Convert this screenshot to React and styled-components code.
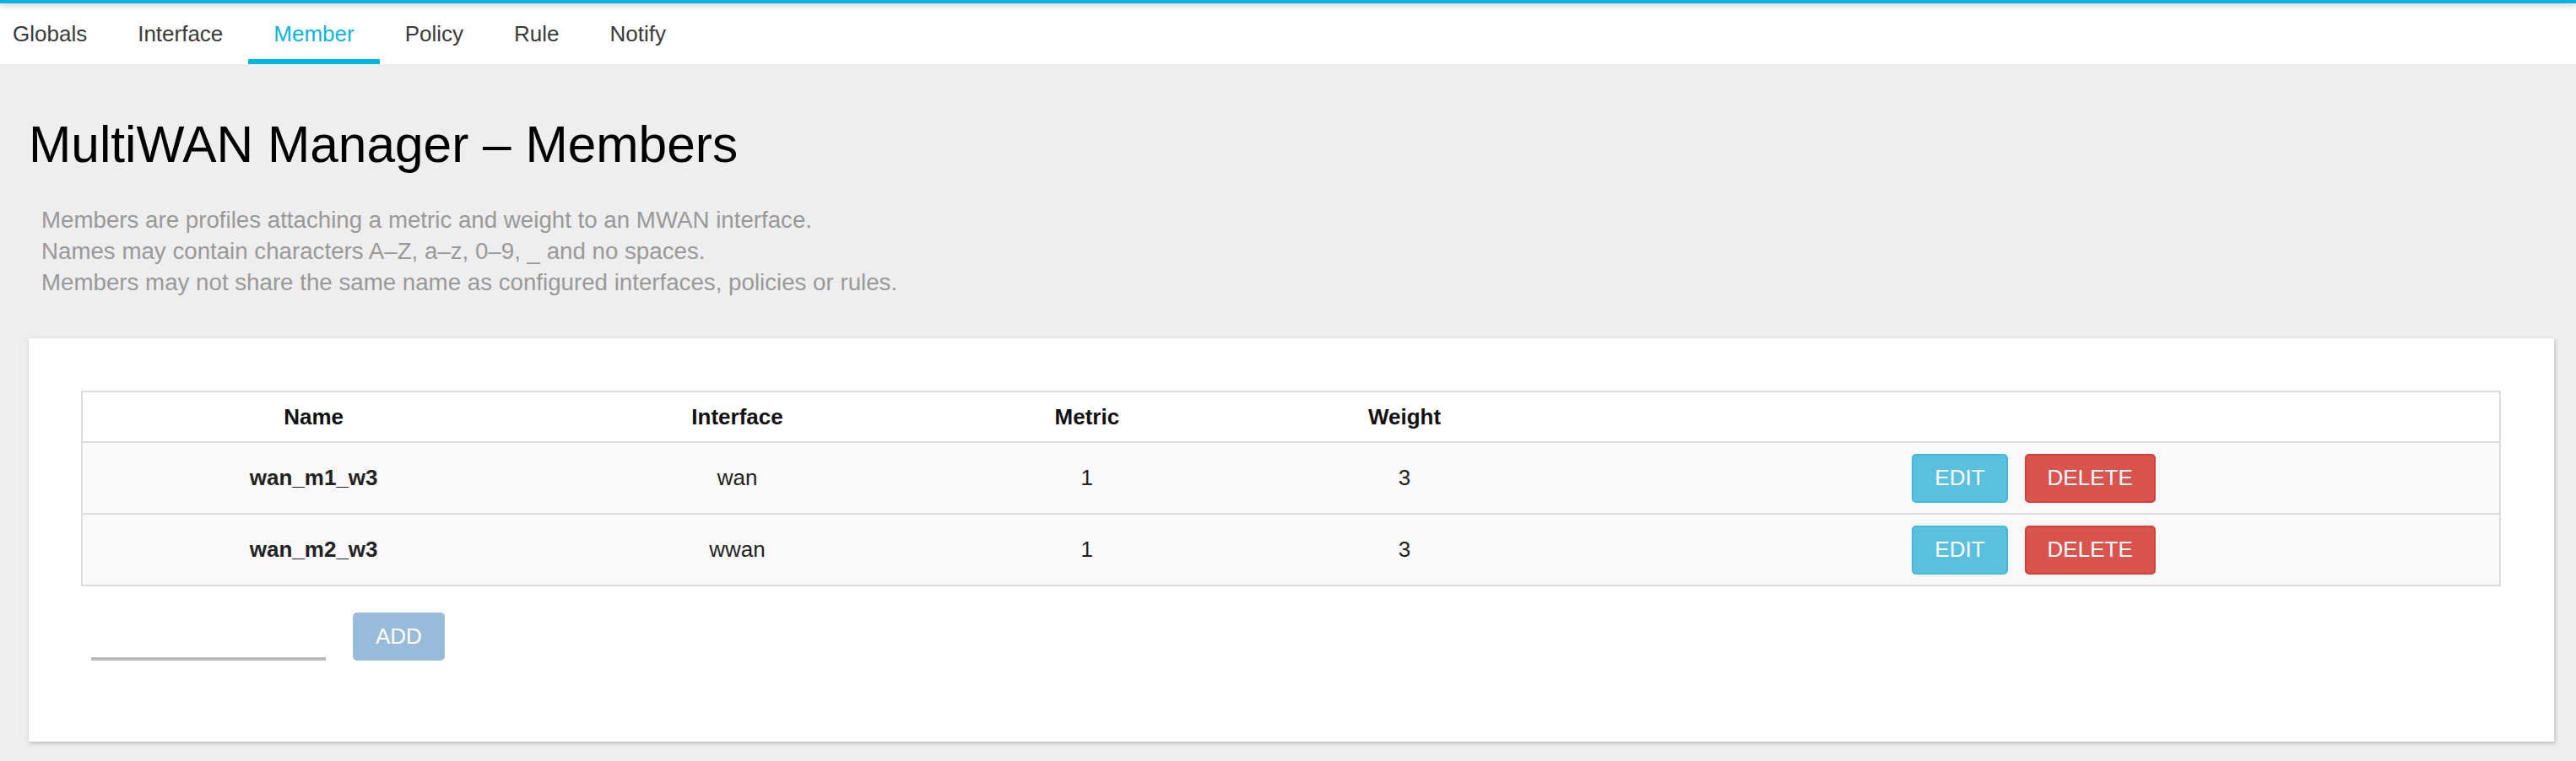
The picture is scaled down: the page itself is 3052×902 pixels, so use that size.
import React from "react";
import styled, { createGlobalStyle, css } from "styled-components";

const GlobalStyle = createGlobalStyle`
  html, body {
    margin: 0;
    padding: 0;
    background: #eeeeee;
  }
  body {
    font-family: "Liberation Sans", Arial, Helvetica, sans-serif;
  }
  * { box-sizing: border-box; }
`;

const Page = styled.div`
  display: flex;
  flex-direction: column;
  min-height: 902px;
  background: #eeeeee;
`;

const Header = styled.header`
  display: flex;
  flex-direction: column;
  background: #ffffff;
`;

const TopBar = styled.div`
  height: 4px;
  background: #06b4e2;
  box-shadow: 0 2px 7px rgba(0, 0, 0, 0.28);
  position: relative;
  z-index: 1;
`;

const Tabs = styled.nav`
  display: flex;
  height: 72px;
`;

const Tab = styled.a`
  display: block;
  padding: 21px 30px 15px;
  font-size: 26px;
  line-height: 30px;
  color: ${(p) => (p.$active ? "#0ab3e3" : "#3a3a3a")};
  border-bottom: 6px solid ${(p) => (p.$active ? "#06b4e2" : "transparent")};
  text-decoration: none;
  cursor: pointer;
  &:first-child {
    padding-left: 15px;
  }
`;

const Main = styled.main`
  display: flex;
  flex-direction: column;
  padding: 60px 26px 0 34px;
`;

const Title = styled.h2`
  margin: 0;
  font-size: 60.4px;
  line-height: 71px;
  font-weight: normal;
  color: #000;
`;

const Description = styled.div`
  margin-top: 35px;
  padding-left: 15px;
  font-size: 27.7px;
  line-height: 37px;
  color: #999999;
`;

const Card = styled.section`
  margin-top: 48px;
  background: #ffffff;
  padding: 62px 63px 96px 62px;
  box-shadow: 1px 2px 5px rgba(0, 0, 0, 0.22);
`;

const Table = styled.table`
  width: 100%;
  border-collapse: collapse;
  table-layout: fixed;
  border: 2px solid #dddddd;
  font-size: 26px;
`;

const HeadCell = styled.th`
  height: 60px;
  padding: 0;
  text-align: center;
  vertical-align: middle;
  font-weight: bold;
  color: #111;
  background: #fff;
`;

const Row = styled.tr`
  background: #f9f9f9;
`;

const Cell = styled.td`
  height: 85px;
  padding: 0;
  border-top: 2px solid #dddddd;
  text-align: center;
  vertical-align: middle;
  color: #222;
  font-weight: ${(p) => (p.$strong ? "bold" : "normal")};
`;

const Actions = styled.div`
  display: flex;
  justify-content: center;
  gap: 20px;
  padding-left: 4px;
`;

const variants = {
  info: css`
    background: #5bc0de;
    border-color: #46b8da;
  `,
  danger: css`
    background: #d9534f;
    border-color: #d43f3a;
  `,
  primary: css`
    background: #337ab7;
    border-color: #3a7fba;
  `,
};

const Button = styled.button`
  display: inline-flex;
  align-items: center;
  justify-content: center;
  height: 58px;
  padding: 0 25px;
  border: 2px solid;
  border-radius: 5px;
  font-family: inherit;
  font-size: 26px;
  color: #fff;
  cursor: pointer;
  ${(p) => variants[p.$variant]}
  &:disabled {
    opacity: 0.5;
    cursor: not-allowed;
  }
`;

const AddRow = styled.div`
  display: flex;
  align-items: flex-end;
  gap: 32px;
  margin-top: 31px;
  padding-left: 12px;
`;

const NameInput = styled.input`
  width: 278px;
  height: 57px;
  border: none;
  border-bottom: 4px solid #bbbbbb;
  background: transparent;
  font-family: inherit;
  font-size: 26px;
  outline: none;
`;

const AddButton = styled(Button)`
  height: 57px;
  padding: 0 25px;
`;

const tabs = ["Globals", "Interface", "Member", "Policy", "Rule", "Notify"];

const members = [
  { name: "wan_m1_w3", iface: "wan", metric: 1, weight: 3 },
  { name: "wan_m2_w3", iface: "wwan", metric: 1, weight: 3 },
];

export default function App() {
  return (
    <>
      <GlobalStyle />
      <Page>
        <Header>
          <TopBar />
          <Tabs>
            {tabs.map((t) => (
              <Tab key={t} $active={t === "Member"}>
                {t}
              </Tab>
            ))}
          </Tabs>
        </Header>
        <Main>
          <Title>MultiWAN Manager – Members</Title>
          <Description>
            <div>Members are profiles attaching a metric and weight to an MWAN interface.</div>
            <div>Names may contain characters A–Z, a–z, 0–9, _ and no spaces.</div>
            <div>Members may not share the same name as configured interfaces, policies or rules.</div>
          </Description>
          <Card>
            <Table>
              <colgroup>
                <col style={{ width: "19.14%" }} />
                <col style={{ width: "15.93%" }} />
                <col style={{ width: "12.99%" }} />
                <col style={{ width: "13.27%" }} />
                <col />
              </colgroup>
              <thead>
                <tr>
                  <HeadCell>Name</HeadCell>
                  <HeadCell>Interface</HeadCell>
                  <HeadCell>Metric</HeadCell>
                  <HeadCell>Weight</HeadCell>
                  <HeadCell />
                </tr>
              </thead>
              <tbody>
                {members.map((m) => (
                  <Row key={m.name}>
                    <Cell $strong>{m.name}</Cell>
                    <Cell>{m.iface}</Cell>
                    <Cell>{m.metric}</Cell>
                    <Cell>{m.weight}</Cell>
                    <Cell>
                      <Actions>
                        <Button $variant="info">EDIT</Button>
                        <Button $variant="danger">DELETE</Button>
                      </Actions>
                    </Cell>
                  </Row>
                ))}
              </tbody>
            </Table>
            <AddRow>
              <NameInput type="text" />
              <AddButton $variant="primary" disabled>
                ADD
              </AddButton>
            </AddRow>
          </Card>
        </Main>
      </Page>
    </>
  );
}
